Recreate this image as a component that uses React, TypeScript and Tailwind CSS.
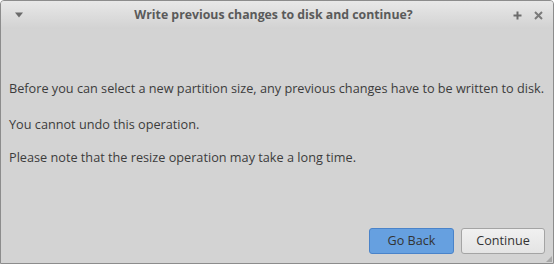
import React from 'react';

export default function App() {
  return (
    <div
      className="w-[554px] h-[264px] flex flex-col border border-[#8c8c8c] rounded-t-[4px] overflow-hidden bg-[#d3d3d3] text-[#3c3c3c]"
      style={{ fontFamily: '"Open Sans", "Noto Sans", sans-serif' }}
    >
      {/* Title bar */}
      <div className="h-[28px] shrink-0 flex items-center pl-3 pr-[10px] bg-gradient-to-b from-[#e8e8e8] to-[#d2d2d2]">
        <svg width="10" height="6" viewBox="0 0 10 6" className="ml-[1px] mr-[10px]">
          <path d="M1 0.5 H9 L5 5.5 Z" fill="#6a6a6a" />
        </svg>
        <div className="flex-1 text-center text-[12.3px] font-bold text-[#5a5a5a] leading-none">
          Write previous changes to disk and continue?
        </div>
        <div className="flex items-center gap-[12px]">
          <svg width="9" height="9" viewBox="0 0 9 9">
            <path d="M4.5 0.5 V8.5 M0.5 4.5 H8.5" stroke="#6c6c6c" strokeWidth="2" />
          </svg>
          <svg width="9" height="9" viewBox="0 0 9 9">
            <path d="M1 1 L8 8 M8 1 L1 8" stroke="#7a7a7a" strokeWidth="2" />
          </svg>
        </div>
      </div>

      {/* Body */}
      <div className="flex-1 flex flex-col pl-[8px] pr-[6px] pt-[50px] text-[12.7px] leading-[18px]">
        <p className="whitespace-nowrap">Before you can select a new partition size, any previous changes have to be written to disk.</p>
        <p className="mt-[18px]">You cannot undo this operation.</p>
        <p className="mt-[15px]">Please note that the resize operation may take a long time.</p>
        <div className="mt-auto mb-[9px] pr-[2px] flex justify-end gap-[7px] relative">
          <button className="w-[85px] h-[26px] rounded-[3px] border border-[#4a83c9] bg-[#66a0e0] text-[12.6px] text-[#333]">
            Go Back
          </button>
          <button className="w-[84px] h-[26px] rounded-[3px] border border-[#a4a4a4] bg-gradient-to-b from-[#f0f0f0] to-[#e4e4e4] text-[12.6px] text-[#333]">
            Continue
          </button>
          <svg width="6" height="6" viewBox="0 0 6 6" className="absolute right-[-5px] bottom-[-8px]">
            <path d="M6 0 L6 6 L0 6 Z" fill="#a8a8a8" />
          </svg>
        </div>
      </div>
    </div>
  );
}
